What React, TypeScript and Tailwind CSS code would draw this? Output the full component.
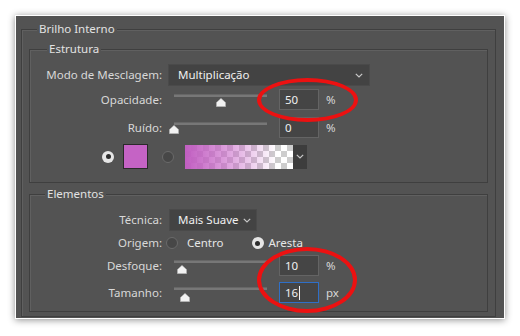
import React from "react";

const FONT = { fontFamily: '"Noto Sans", "Open Sans", sans-serif' };

function Chevron() {
  return (
    <svg width="8" height="5" viewBox="0 0 8 5" className="block">
      <path d="M0.8 0.8 L4 4 L7.2 0.8" fill="none" stroke="#c8c8c8" strokeWidth="1.2" />
    </svg>
  );
}

function Thumb() {
  return (
    <svg width="10" height="9" viewBox="0 0 10 9" className="block">
      <path d="M5 0.3 L9.7 4.6 L9.7 8.7 L0.3 8.7 L0.3 4.6 Z" fill="#f2f2f2" stroke="#9a9a9a" strokeWidth="0.6" />
    </svg>
  );
}

function Slider({ pos, thumbTop }: { pos: number; thumbTop: number }) {
  return (
    <div className="relative h-full w-[107px] shrink-0">
      <div className="mx-[7px] mt-[5px] h-[3px] border-t border-[#666] bg-[#777777]" />
      <div className="absolute" style={{ left: pos - 5, top: thumbTop }}>
        <Thumb />
      </div>
    </div>
  );
}

function NumBox({ value, focused }: { value: string; focused?: boolean }) {
  return (
    <div
      className={
        focused
          ? "flex h-full w-[40px] shrink-0 items-center border border-[#2f6fc7] bg-[#454545] pl-[5px] text-[11.5px] text-[#f0f0f0]"
          : "flex h-full w-[40px] shrink-0 items-center border border-[#646464] bg-[#454545] pl-[5px] text-[11.5px] text-[#f0f0f0]"
      }
    >
      {value}
      {focused ? <span className="ml-[1px] h-[14px] w-[1px] bg-[#f0f0f0]" /> : null}
    </div>
  );
}

function Label({ children }: { children: React.ReactNode }) {
  return <div className="w-[133px] shrink-0 pr-[1px] text-right text-[11.5px] text-[#d8d8d8]">{children}</div>;
}

function Radio({ checked }: { checked?: boolean }) {
  return checked ? (
    <div className="flex h-[12px] w-[12px] shrink-0 items-center justify-center rounded-full bg-[#e6e6e6]">
      <div className="h-[5px] w-[5px] rounded-full bg-[#2d2d2d]" />
    </div>
  ) : (
    <div className="h-[12px] w-[12px] shrink-0 rounded-full border border-[#6a6a6a] bg-[#474747]" />
  );
}

function SliderRow({
  label,
  value,
  unit,
  pos,
  thumbTop,
  focused,
  mt,
}: {
  label: string;
  value: string;
  unit: string;
  pos: number;
  thumbTop: number;
  focused?: boolean;
  mt: string;
}) {
  return (
    <div className={"flex h-[21px] items-center " + mt}>
      <Label>{label}</Label>
      <div className="ml-[4px] flex h-full items-stretch">
        <Slider pos={pos} thumbTop={thumbTop} />
        <div className="ml-[5px] h-full">
          <NumBox value={value} focused={focused} />
        </div>
        <div className="ml-[7px] flex items-center text-[11.5px] text-[#d8d8d8]">{unit}</div>
      </div>
    </div>
  );
}

export default function App() {
  return (
    <div className="relative h-[336px] w-[520px] bg-white pl-[15px] pt-[15px]" style={FONT}>
      <div className="h-[304px] w-[490px] border border-white bg-[#535353] pb-[2px] pl-[5px] pr-[8px] pt-[5px] shadow-[0_1px_7px_rgba(0,0,0,0.45)]">
        <fieldset className="h-[296px] border border-[#3f3f3f] px-[7px] pb-[3px] shadow-[inset_1px_1px_0_#606060]">
          <legend className="ml-[8px] bg-[#535353] px-[2px] text-[11.5px] leading-[16px] text-[#e2e2e2]">
            Brilho Interno
          </legend>

          <fieldset className="mt-[4px] h-[142px] border border-[#3f3f3f] px-0 shadow-[inset_1px_1px_0_#606060]">
            <legend className="ml-[17px] bg-[#535353] px-[2px] text-[11.5px] leading-[16px] text-[#e2e2e2]">
              Estrutura
            </legend>
            <div className="mt-[7px] flex h-[22px] items-center">
              <Label>Modo de Mesclagem:</Label>
              <div className="ml-[5px] flex h-full w-[202px] items-center justify-between border border-[#4a4a4a] bg-[#434343] pl-[9px] pr-[6px] text-[11.5px] text-[#f0f0f0]">
                <span>Multiplicação</span>
                <Chevron />
              </div>
            </div>
            <SliderRow label="Opacidade:" value="50" unit="%" pos={54} thumbTop={9} mt="mt-[3px]" />
            <SliderRow label="Ruído:" value="0" unit="%" pos={7} thumbTop={8} mt="mt-[7px]" />
            <div className="ml-[72px] mt-[6px] flex h-[25px] items-center">
              <Radio checked />
              <div className="ml-[9px] h-[25px] w-[25px] border border-[#2a2a2a] bg-[#c563c5]" />
              <div className="ml-[14px]">
                <Radio />
              </div>
              <div className="ml-[11px] flex h-[24px]">
                <div className="h-full w-[108px] bg-[conic-gradient(#cdcdcd_25%,#ffffff_0_50%,#cdcdcd_0_75%,#ffffff_0)] bg-[length:12px_12px]">
                  <div className="h-full w-full bg-[linear-gradient(to_right,#c15ec1,rgba(200,100,200,0.6)_40%,rgba(230,190,230,0)_85%)]" />
                </div>
                <div className="flex h-full w-[14px] items-center justify-center bg-[#3d3d3d]">
                  <Chevron />
                </div>
              </div>
            </div>
          </fieldset>

          <fieldset className="mt-[3px] h-[126px] border border-[#3f3f3f] px-0 shadow-[inset_1px_1px_0_#606060]">
            <legend className="ml-[15px] bg-[#535353] px-[2px] text-[11.5px] leading-[16px] text-[#e2e2e2]">
              Elementos
            </legend>
            <div className="mt-[7px] flex h-[22px] items-center">
              <Label>Técnica:</Label>
              <div className="ml-[6px] flex h-full w-[88px] items-center justify-between border border-[#4a4a4a] bg-[#434343] pl-[8px] pr-[5px] text-[11.5px] text-[#f0f0f0]">
                <span>Mais Suave</span>
                <Chevron />
              </div>
            </div>
            <div className="mt-[2px] flex h-[20px] items-center">
              <Label>Origem:</Label>
              <div className="ml-[3px] flex items-center text-[11.5px] text-[#e6e6e6]">
                <Radio />
                <span className="ml-[9px]">Centro</span>
                <div className="ml-[28px]">
                  <Radio checked />
                </div>
                <span className="ml-[5px]">Aresta</span>
              </div>
            </div>
            <SliderRow label="Desfoque:" value="10" unit="%" pos={15} thumbTop={10} mt="mt-[2px]" />
            <SliderRow label="Tamanho:" value="16" unit="px" pos={18} thumbTop={11} focused mt="mt-[6px]" />
          </fieldset>
        </fieldset>
      </div>

      <div className="pointer-events-none absolute left-[257px] top-[78px] h-[44px] w-[101px] rounded-[50%] border-[4px] border-[#ec1111]" />
      <div className="pointer-events-none absolute left-[257px] top-[247px] h-[66px] w-[100px] rounded-[50%] border-[4px] border-[#ec1111]" />
    </div>
  );
}
